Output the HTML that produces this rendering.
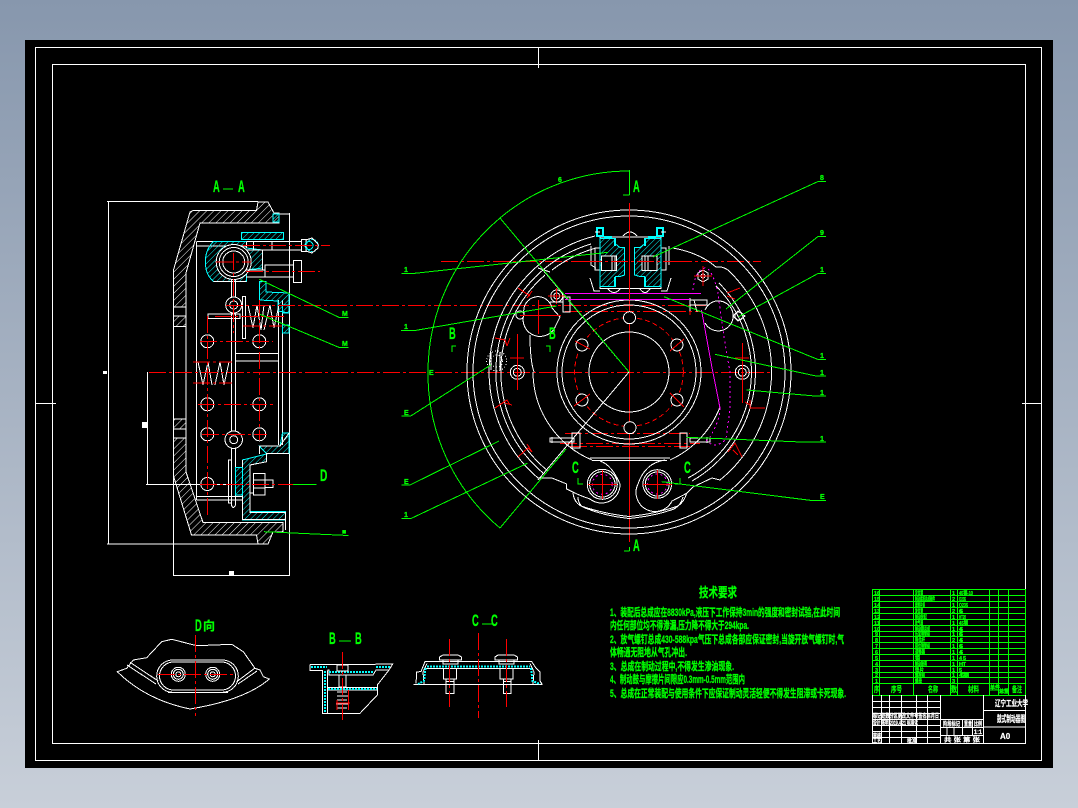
<!DOCTYPE html>
<html><head><meta charset="utf-8"><style>
html,body{margin:0;padding:0;width:1078px;height:808px;overflow:hidden;background:linear-gradient(#8797ad,#c8cfd9)}
svg{position:absolute;left:0;top:0}
.w,.r,.g,.c,.m,.d{fill:none;stroke-width:1}
.w{stroke:#fff}.r{stroke:#f00;stroke-dasharray:17 3 3 3}.rs{fill:none;stroke:#f00}.g{stroke:#0f0}.c{stroke:#0ff}.m{stroke:#f0f}.d{stroke:#f0f;stroke-dasharray:2 3}
.t{fill:#0f0;stroke:#0f0;stroke-width:.3;font-family:"Liberation Sans","Noto Sans CJK SC",sans-serif;font-weight:bold}
.tw{fill:#fff;stroke:#fff;stroke-width:.25;font-family:"Liberation Sans","Noto Sans CJK SC",sans-serif;font-weight:bold}
</style></head><body>
<svg width="1078" height="808" viewBox="0 0 1078 808" xmlns="http://www.w3.org/2000/svg" shape-rendering="crispEdges">
<defs>
<pattern id="hw" width="5" height="5" patternUnits="userSpaceOnUse" patternTransform="rotate(45)"><line x1="0" y1="0" x2="0" y2="5" stroke="#fff" stroke-width="1"/></pattern>
<pattern id="hc" width="4" height="4" patternUnits="userSpaceOnUse" patternTransform="rotate(45)"><line x1="0" y1="0" x2="0" y2="4" stroke="#0ff" stroke-width="1"/></pattern>
</defs>
<rect x="25" y="40" width="1028" height="728" fill="#000"/>
<!-- frames -->
<rect class="w" x="35.5" y="47.5" width="1006" height="713"/>
<rect class="w" x="52.5" y="64.5" width="973" height="679"/>
<path class="w" d="M538.5,47V68M538.5,740V760M36,403.5H56M1022,403.5H1042"/>

<!-- LEFT SECTION A-A -->
<g>
<path class="w" d="M107,201.5H258M108.5,201V544M107,544H258M173.5,476V576M289.5,213V576M173,575.5H289.5M147.5,372V484.5M146,484.5H230"/>
<rect x="103" y="371" width="4" height="3" fill="#fff"/><rect x="229" y="571" width="5" height="4" fill="#fff"/>
<rect x="142" y="422" width="5" height="6" fill="#fff"/>
<path class="w" style="fill:url(#hw)" d="M258,202H268L274,213H279V223H200L186,273V307H173.5V270L190,212L193,210.5H256.5Z"/>
<path class="w" style="fill:url(#hw)" d="M173.5,438H186V472L203,522.5H283V532H273L268,544H258L256.5,535H191.5L173.5,476Z"/>
<path class="w" style="fill:url(#hw)" d="M173.5,316H186V326.5H173.5ZM173.5,419H186V429H173.5Z"/>
<path class="w" d="M173.5,307V316M186,307V316M173.5,326.5V419M186,326.5V419M173.5,429V438M186,429V438"/>
<path class="w" d="M196.5,242V500M196.5,241.5H253M196.5,246H246M196.5,496.5H243M196.5,500H243M231.5,280V505M235.5,280V505Q233,510 231.5,505M278.5,300V445M282.5,300V445M235,353.5H278M235,361H278M279,214H289.5"/>
<path class="c" style="fill:url(#hc)" d="M213.5,241.5Q205,250 205.5,262Q205,274 213.5,281.5H246.5V270L262.5,268V250L246.5,248V241.5Z"/>
<circle cx="233.7" cy="262" r="17.5" fill="#000" stroke="#fff"/><circle class="w" cx="233.7" cy="262" r="14.5"/><circle class="w" cx="233.7" cy="262" r="11"/>
<path class="w" d="M213.5,281.5H246.5M246.5,270H262.5V250H246.5M246.5,241.5V248"/>
<path class="c" style="fill:url(#hc)" d="M241.7,232.7H283.3V239.3H241.7ZM273,214H279V222H273ZM259.3,281.7H266V292L289,293V313L278,311V301L259.3,300ZM282.5,305H289V313H282.5ZM282.5,325H289V333H282.5Z"/>
<rect class="w" x="253.5" y="241.5" width="48" height="8.5"/><path class="w" d="M272,241.5V250"/><rect class="w" x="301.5" y="239.5" width="4.5" height="12"/>
<circle cx="312.3" cy="245.5" r="6" fill="none" stroke="#0ff" stroke-dasharray="2 1"/><circle class="c" cx="309" cy="245.5" r="4"/><path class="w" d="M306,240L312,238L318,244V248L312,253L306,251"/>
<rect class="w" x="265" y="265" width="28.5" height="12"/><rect class="w" x="293.5" y="260.5" width="8" height="22"/><path class="w" d="M246,270H265M246,277H265"/>
<circle class="w" cx="207.3" cy="341.3" r="6.5"/><circle class="w" cx="259.3" cy="341.3" r="6.5"/><circle class="w" cx="207.3" cy="404.3" r="6.5"/><circle class="w" cx="259.3" cy="404.3" r="6.5"/><circle class="w" cx="207.3" cy="434.3" r="6.5"/><circle class="w" cx="259.3" cy="434.3" r="6.5"/><circle class="w" cx="207.3" cy="484" r="6.5"/>
<circle cx="233.7" cy="305" r="8" fill="#000" stroke="#fff"/><circle class="w" cx="233.7" cy="305" r="4"/>
<circle cx="233.7" cy="439.7" r="8.7" fill="#000" stroke="#fff"/><circle class="w" cx="233.7" cy="439.7" r="4"/>
<rect x="242.3" y="296.7" width="3.4" height="41.6" fill="#000" stroke="#fff"/><rect class="w" x="208" y="314" width="32" height="4.3"/>
<path class="w" d="M248,305L253,328L257,305L261,330L264,305M264,330L270,305L274,328L279,305"/>
<path class="w" d="M198,362L203,385L208,362L212,385M215,385L220,362L224,385L229,362"/>
<path class="c" style="fill:url(#hc)" d="M282.5,433H289V453.3H266.7V461.7L250,465V511.7H285.7V520H242.3V460L266.7,454L259.3,446H280Z"/>
<path class="w" d="M242.3,460V519.3H285.7V512.3H250V465L266.7,461.7V453.3H289M259.3,446V454M259.3,446H280L289,433"/>
<rect class="c" x="235.7" y="467.3" width="6.6" height="27.7" style="fill:url(#hc)"/>
<rect class="w" x="253.3" y="473.3" width="11.7" height="21.7"/><path class="w" d="M253.3,480H265M253.3,488H265"/><rect class="w" x="265" y="480" width="8" height="7.7"/><path class="w" d="M250,475V493H253"/>
<rect class="w" x="228.3" y="460" width="3.4" height="43"/>
<path class="w" d="M283,522V532H273M285.7,520V530"/>
<!-- red centres -->
<path class="r" d="M207.5,316V518M259.5,300V440M233.5,253V333M216,262H251M243,245.5H330M246,271.5H320M215,316.5H287M243,326H282M200,341.5H273M193,362H232M193,383H232M198,404.5H273M202,434.5H267M200,484.5H293"/>
</g>
<path class="r" d="M149,372.5H772" stroke-dasharray="24 3 4 3" style="stroke-width:1"/>
<path class="r" d="M226,305.5H706M441,261.5H761M565,311.5H700M565,433.5H690M560,443.5H700M570,446.5H690"/>
<path class="rs" d="M629.5,203V542"/>

<!-- MAIN VIEW -->
<g>
<circle class="w" cx="629" cy="372" r="162"/><circle class="w" cx="629" cy="372" r="156"/>
<path class="w" d="M595,236A140,140 0 0 0 538,478L552,478L566.7,484V489Q578,495 590,499"/>
<path class="w" d="M591,244A133,133 0 0 0 543,473"/>
<path class="w" d="M545,275A128,128 0 0 0 548,471"/>
<path class="w" d="M538,268L550,272M600,247A128,128 0 0 0 552,270"/>
<path class="w" d="M673,248Q700,253 716,267Q722,266 728,270A140,140 0 0 1 720,480L712,478L693,487L686.7,493.3"/>
<path class="w" d="M716,286A121,121 0 0 1 688,478"/>
<path class="w" d="M719,283A126,126 0 0 1 692,481"/>
<path class="w" d="M573,493Q574,502 581,506Q605,514 629,516.5Q655,514 678,506Q684,502 686.7,493.3M578,497Q578,505 585,508Q605,516 629,518.5Q655,516 674,509Q681,505 683,497"/>
<circle class="w" cx="629" cy="372" r="72"/><circle class="w" cx="629" cy="372" r="67"/><circle class="w" cx="629" cy="372" r="40"/>
<circle cx="629" cy="372" r="54.3" fill="none" stroke="#f00" stroke-dasharray="5 3"/>
<path class="w" d="M592,460.5H667M590,458H670"/>
<path class="w" d="M533,372A96,96 0 0 0 592,460M530,335Q530,360 534,372"/>
<path class="w" d="M720,407A97,97 0 0 1 670,460"/>
<path class="w" d="M600,461Q612,465 620,484A18.5,18.5 0 0 1 590,499"/>
<path class="w" d="M665,460Q645,463 638,484A19,19 0 0 0 672,501L686.7,493.3"/>
<circle class="w" cx="602.3" cy="484.3" r="15"/><circle class="w" cx="602.3" cy="484.3" r="12.7"/><circle class="d" cx="602.3" cy="484.3" r="10"/>
<circle class="w" cx="657.3" cy="484" r="14.3"/><circle class="w" cx="657.3" cy="484" r="12"/><circle class="d" cx="657.3" cy="484" r="10"/>
<path class="rs" d="M602.5,470V499M588,484.5H617M657.5,470V499M643,484.5H672"/>
<g fill="#000" stroke="#fff">
<circle cx="629.5" cy="317.7" r="6"/><circle cx="582" cy="345" r="6"/><circle cx="582" cy="400" r="6"/><circle cx="630" cy="427.7" r="6"/><circle cx="677" cy="400" r="6"/><circle cx="677" cy="345" r="6"/>
</g>
<path class="rs" d="M575,341L590,349M574,406L590,394M670,393L684,407M670,351L684,339"/>
<path class="w" d="M543,270L629,372L538,480"/>
<!-- lobes -->
<path class="w" d="M524,314A14,14 0 0 1 552,308L560,317L556,325A14,14 0 0 1 524,314"/>
<circle class="w" cx="520" cy="315" r="4"/>
<circle class="w" cx="556.7" cy="296" r="6"/><circle class="w" cx="556.7" cy="296" r="3"/>
<path class="rs" d="M538.5,300V334M520,315.5H561M548,296H566M556.5,288V304"/>
<path class="w" d="M705,310Q710,300 720,301A15,15 0 1 1 705,323"/><circle class="w" cx="739" cy="316" r="4"/><path class="w" d="M738,311L745,316L738,321L733,316Z"/>
<path class="w" d="M698,273L703,270L708,273V279L703,282L698,279Z"/><circle class="w" cx="703" cy="276" r="2"/>
<path class="rs" d="M703,266V286M694,276H712M690,298V315"/>
<!-- pins -->
<path class="w" d="M563,297H570V312H563ZM550,302H563M690,300H707V305H690M690,298V311M694,300L697,312"/>
<path class="w" d="M550,438H574V442H550ZM552,437V443M572,433H580V448H572ZM680,433H687V448H680ZM690,438H710V442H690ZM707,437V443"/>
<circle class="w" cx="517.3" cy="372.3" r="7"/><circle class="w" cx="517.3" cy="372.3" r="4"/>
<circle class="w" cx="742.3" cy="372.3" r="7"/><circle class="w" cx="742.3" cy="372.3" r="4"/>
<path class="rs" d="M517.5,334V390M510,358H524M742.5,343V403M735,358H749"/>
<circle cx="496.7" cy="361" r="10" fill="none" stroke="#fff" stroke-dasharray="1 2"/><circle cx="496.7" cy="361" r="6" fill="none" stroke="#fff" stroke-dasharray="1 2"/><path class="w" d="M491,352V370M500,352V370"/>
<path class="rs" d="M518,288L527,294L530,296M527,298L532,291M495,338L505,340L507,346M510,338L507,346M495,408L507,400L510,405M505,403L512,405M518,457L528,448L532,452M527,444L532,452M727,293L740,288M727,296L735,299M750,400V408L765,408M750,405L745,402M728,452L735,443L742,457M733,450L738,455"/>
<!-- magenta -->
<path class="m" d="M565,293.5H701M565,299.5H690M701.5,310L711.5,365L720,408"/>
<path class="d" d="M693,290Q695,270 705,268Q712,268 718,293Q720,310 725,343L730,372V408L727,432Q727,445 712,445L706,440M720,408Q720,420 710,437"/>
<!-- caliper -->
<rect x="596" y="233" width="69" height="58" fill="#000"/>
<path class="w" d="M600,237H661V288.5H600ZM600,248H595V270H600M661,248H666V270H661M590,278L594,291H600M671,278L667,291H661M623,236Q630,228 637,236M608,289Q614,296 620,289M640,289Q645,296 650,289"/>
<path class="w" d="M591,246V265L596,268M669,246V265"/>
<path class="c" style="fill:url(#hc)" d="M600,238.5H615.5V244L620,247.5H624.5V275L620,276.5H615.5V286.5H600Z"/>
<path class="c" style="fill:url(#hc)" d="M661,238.5H644.5V244L640,247.5H634.5V275L640,276.5H644.5V286.5H661Z"/>
<rect x="601.7" y="256" width="15" height="14.5" fill="#000" stroke="#fff"/><rect x="642" y="256" width="15" height="14.5" fill="#000" stroke="#fff"/>
<path class="w" d="M612,256V270M615,256V270M645,256V270M648,256V270"/>
<path class="c" stroke-width="2" style="stroke-width:2" d="M597,228H603V236H597ZM657,228H663V236H657ZM615,238V246M645,238V246M615,277V287M645,277V287M604,237H612M648,237H656"/>
<path class="rs" d="M629.5,203V300"/>
<path class="r" d="M585,261.5H680"/>
<path class="w" d="M595,232H600M661,232H666"/>
</g>

<!-- green construction & leaders -->
<g>
<path class="g" d="M500,218L629,372M500,528L566,449"/>
<path class="g" d="M629,171A201,201 0 0 0 500,218A201,201 0 0 0 428,372A201,201 0 0 0 500,528"/>
<path class="g" d="M629.5,170V195M623,195H629.5M629.5,547V551M624,551H629.5"/>
<path class="g" d="M826,181.5H818L653,257M826,236.5H818L726,309M826,273.5H818L738.7,316.7M826,359.5H818L664,296.7M826,376H816L715,354.3M826,396H815L746.7,390M826,442H801.7L686.7,437.3M826,500.5H811.7L661.7,481.7"/>
<path class="g" d="M401.5,273.5H413L608,252.3M401,330.5H415L556.7,306M401.5,416H410.7L490.7,365M401.5,485H410L499,441M401.5,518.5H411L527.3,463.3"/>
<path class="g" d="M259.3,279.3L339.3,317.5H348.3M259.3,314L339.3,347.5H348.3M264,531.7L348.3,535.5M293,484.5H316.7M223,189H233"/>
<path class="g" d="M452,352V346H456M550,352V346H546M578,478V484H583M680,478V484H675"/>
</g>
<g class="t" font-size="8">
<text x="820" y="180" font-size="7">8</text><text x="820" y="235" font-size="7">9</text><text x="820" y="272" font-size="7">1</text><text x="820" y="358" font-size="7">1</text><text x="820" y="375" font-size="7">1</text><text x="820" y="395" font-size="7">1</text><text x="820" y="441" font-size="7">1</text><text x="820" y="499" font-size="7">E</text>
<text x="404" y="272" font-size="7">1</text><text x="404" y="329" font-size="7">1</text><text x="404" y="415" font-size="7">E</text><text x="404" y="484" font-size="7">E</text><text x="404" y="517" font-size="7">1</text>
<text x="342" y="316" font-size="7">M</text><text x="342" y="346" font-size="7">M</text><text x="342" y="534" font-size="7">■</text>
<text x="429" y="375" font-size="7">E</text><text x="558" y="182" font-size="7">6</text>
</g>
<g class="t" font-size="17">
<text transform="translate(213,192) scale(.55,1)">A</text><text transform="translate(238,192) scale(.55,1)">A</text>
<text transform="translate(633,192) scale(.55,1)">A</text><text transform="translate(633,551) scale(.55,1)">A</text>
<text transform="translate(449,339) scale(.55,1)">B</text><text transform="translate(549,339) scale(.55,1)">B</text>
<text transform="translate(572,473) scale(.55,1)">C</text><text transform="translate(684,473) scale(.55,1)">C</text>
<text transform="translate(320,481) scale(.6,1)">D</text>
<text transform="translate(195,631) scale(.55,1)">D</text><text x="203" y="630" font-size="12">向</text>
<text transform="translate(329,644) scale(.55,1)">B</text><text transform="translate(355,644) scale(.55,1)">B</text>
<text transform="translate(472,626) scale(.55,1)">C</text><text transform="translate(491,626) scale(.55,1)">C</text>
</g>
<path class="g" d="M339,641H351M482,624H492"/>

<!-- D view -->
<g>
<path class="w" d="M117.3,671.7L126.7,668.3L133.3,660L146.7,657.7L161.7,641.7L171.7,639.3L196.7,645.7L231.7,644.3L243.3,651.7L255,668.3L260,670L263.3,676.7L269.3,679Q245,700 190,709Q146,700 117.3,671.7Z"/>
<path class="w" d="M130,662.3L158.3,681M127,665L156,684M255,668L236.7,681.7M257,671L238,684"/>
<rect class="w" x="156.7" y="660" width="81.6" height="32.3" rx="16"/><rect class="w" x="159.5" y="662" width="76" height="28" rx="14"/>
<path class="w" d="M168,692.5H228"/>
<circle class="w" cx="178.3" cy="674.3" r="7"/><circle class="w" cx="178.3" cy="674.3" r="5"/><circle class="w" cx="178.3" cy="674.3" r="2.5"/>
<circle class="w" cx="212.7" cy="674.3" r="7"/><circle class="w" cx="212.7" cy="674.3" r="5"/><circle class="w" cx="212.7" cy="674.3" r="2.5"/>
<path class="r" d="M195.5,635V716M158,674.5H233"/>
</g>

<!-- B-B -->
<g>
<path class="w" d="M310,664.3H375L379,664H392.7L389,670L377.3,685V695L360,713.3H327.3M310,664.3V670.7H322.7V713.3H327.3V670.7M327.3,670H329V675H373L376,670H389M327.3,687.7H377.3M327.3,690H377.3"/>
<path class="c" style="stroke-width:2" stroke-dasharray="2 1" d="M311,667H327M329,672H373M376,667H391M325,671V713M328,689H377"/>
<rect class="w" x="337" y="665" width="11" height="6"/><rect class="w" x="339" y="675" width="7" height="12"/>
<path class="w" d="M337,692H347M337,696H348M337,700H347M336,704H348M337,708H347"/>
<path class="r" d="M342.5,652V720"/>
<path class="rs" d="M348.5,690V710M337,700V710M336,703H350"/>
</g>

<!-- C-C -->
<g>
<path class="w" d="M413.3,684.5H542.7M416,683.5L416.7,672L421,671.5L425,661.7H531.7L536,668L540,672V681L542,684"/>
<path class="w" d="M427,663.5L423,672L424,684M530,663.5L534,672L533,684M426,668.5H531"/>
<path class="c" style="stroke-width:2" stroke-dasharray="2 1" d="M427,666.5H530M425.5,668L424,681L418,684M531,668L532.5,681L540,684"/>
<path class="w" d="M439.5,660V657L443,655H458L461.5,657V660ZM495,660V657L498,655H514L517.5,657V660Z"/>
<path class="w" d="M443,660V664H458V660M499,660V664H514V660"/>
<rect class="w" x="443.5" y="668.5" width="13" height="10.5"/><rect class="w" x="500" y="668.5" width="13" height="10.5"/>
<rect class="w" x="446" y="681.5" width="8" height="12"/><rect class="w" x="503.5" y="681.5" width="7.5" height="12"/>
<path class="w" d="M446,679V681.5H454V679M503.5,679V681.5H511V679"/>
<path class="r" d="M478.5,633V718M449.5,639V707M506.5,639V707"/>
</g>

<!-- tech requirements -->
<g class="t">
<text x="699" y="597" font-size="13" textLength="38" lengthAdjust="spacingAndGlyphs">技术要求</text>
<g font-size="11">
<text x="610" y="616" textLength="230" lengthAdjust="spacingAndGlyphs">1、装配后总成应在8830kPa,液压下工作保持3min的强度和密封试验,在此时间</text>
<text x="610" y="629" textLength="139" lengthAdjust="spacingAndGlyphs">内任何部位均不得渗漏,压力降不得大于294kpa.</text>
<text x="610" y="643" textLength="234" lengthAdjust="spacingAndGlyphs">2、放气螺钉总成430-588kpa气压下总成各部应保证密封,当旋开放气螺钉时,气</text>
<text x="610" y="656" textLength="77" lengthAdjust="spacingAndGlyphs">体畅通无阻地从气孔冲出.</text>
<text x="610" y="670" textLength="124" lengthAdjust="spacingAndGlyphs">3、总成在制动过程中,不得发生渗油现象.</text>
<text x="610" y="683" textLength="135" lengthAdjust="spacingAndGlyphs">4、制动鼓与摩擦片间隙应0.3mm-0.5mm范围内</text>
<text x="610" y="697" textLength="236" lengthAdjust="spacingAndGlyphs">5、总成在正常装配与使用条件下应保证制动灵活轻便不得发生阻滞或卡死现象.</text>
</g>
</g>

<!-- title block green -->
<g>
<rect class="g" x="872.5" y="589.5" width="153" height="106"/>
<path class="g" d="M872,595.5H1025M872,601.5H1025M872,607.5H1025M872,613.5H1025M872,619.5H1025M872,625.5H1025M872,631.5H1025M872,636.5H1025M872,642.5H1025M872,648.5H1025M872,654.5H1025M872,660.5H1025M872,666.5H1025M872,672.5H1025M872,677.5H1025M872,683.5H1025"/>
<path class="g" d="M879.5,589V695M913.5,589V695M950.5,589V695M957.5,589V695M989.5,589V695M998.5,589V695M1008.5,589V695M989,690H1008"/>
</g>
<g class="t" font-size="5.5">
<text x="874" y="595">16</text><text x="874" y="601">15</text><text x="874" y="607">14</text><text x="874" y="613">13</text><text x="874" y="619">12</text><text x="874" y="625">11</text><text x="874" y="631">10</text><text x="875" y="636">9</text><text x="875" y="642">8</text><text x="875" y="648">7</text><text x="875" y="654">6</text><text x="875" y="660">5</text><text x="875" y="666">4</text><text x="875" y="672">3</text><text x="875" y="677">2</text><text x="875" y="683">1</text>
<text x="915" y="595" textLength="8" lengthAdjust="spacingAndGlyphs">定位销</text>
<text x="915" y="601" textLength="20" lengthAdjust="spacingAndGlyphs">制动底板总成部件</text>
<text x="915" y="607" textLength="10" lengthAdjust="spacingAndGlyphs">摩擦片组</text>
<text x="915" y="613" textLength="8" lengthAdjust="spacingAndGlyphs">复位簧</text>
<text x="915" y="619" textLength="12" lengthAdjust="spacingAndGlyphs">制动轮缸</text>
<text x="915" y="625" textLength="8" lengthAdjust="spacingAndGlyphs">放气阀</text>
<text x="915" y="631" textLength="15" lengthAdjust="spacingAndGlyphs">制动蹄总成</text>
<text x="915" y="636" textLength="15" lengthAdjust="spacingAndGlyphs">压紧弹簧组</text>
<text x="915" y="642" textLength="10" lengthAdjust="spacingAndGlyphs">限位杆</text>
<text x="915" y="648" textLength="15" lengthAdjust="spacingAndGlyphs">回位弹簧组</text>
<text x="915" y="654" textLength="10" lengthAdjust="spacingAndGlyphs">调整器</text>
<text x="915" y="660" textLength="5" lengthAdjust="spacingAndGlyphs">销</text>
<text x="915" y="666" textLength="12" lengthAdjust="spacingAndGlyphs">制动鼓壳</text>
<text x="915" y="672" textLength="9" lengthAdjust="spacingAndGlyphs">垫片</text>
<text x="915" y="677" textLength="10" lengthAdjust="spacingAndGlyphs">螺栓组</text>
<text x="915" y="683" textLength="7" lengthAdjust="spacingAndGlyphs">螺母</text>
<text x="952" y="595">1</text><text x="952" y="601">2</text><text x="952" y="607">1</text><text x="952" y="613">2</text><text x="952" y="619">1</text><text x="952" y="625">1</text><text x="952" y="631">1</text><text x="952" y="636">1</text><text x="952" y="642">2</text><text x="952" y="648">1</text><text x="952" y="654">1</text><text x="952" y="660">1</text><text x="952" y="666">1</text><text x="952" y="672">1</text><text x="952" y="677">1</text><text x="952" y="683">3</text>
<text x="959" y="595" textLength="14" lengthAdjust="spacingAndGlyphs">45钢-10</text>
<text x="959" y="601" textLength="7" lengthAdjust="spacingAndGlyphs">Q235</text>
<text x="959" y="607" textLength="9" lengthAdjust="spacingAndGlyphs">Q235</text>
<text x="959" y="613" textLength="4">65</text>
<text x="959" y="619" textLength="7" lengthAdjust="spacingAndGlyphs">HT20</text>
<text x="959" y="625" textLength="9" lengthAdjust="spacingAndGlyphs">45钢</text>
<text x="959" y="631" textLength="4">45</text><text x="959" y="636" textLength="4">65</text><text x="959" y="642" textLength="4">45</text>
<text x="959" y="648" textLength="4">65</text><text x="959" y="654" textLength="4">45</text><text x="959" y="660" textLength="7">45</text>
<text x="959" y="666" textLength="7">HT</text><text x="959" y="672" textLength="3">5</text><text x="959" y="677" textLength="10">45钢</text>
</g>
<g class="t" font-size="8">
<text x="891" y="692" textLength="11" lengthAdjust="spacingAndGlyphs">序号</text>
<text x="928" y="692" textLength="10" lengthAdjust="spacingAndGlyphs">名称</text>
<text x="968" y="692" textLength="11" lengthAdjust="spacingAndGlyphs">材料</text>
<text x="1012" y="692" textLength="10" lengthAdjust="spacingAndGlyphs">备注</text>
<text x="874" y="692" textLength="5" lengthAdjust="spacingAndGlyphs">序</text><text x="951" y="692" textLength="6" lengthAdjust="spacingAndGlyphs">数</text>
<text x="990" y="689" font-size="5">单件</text><text x="999" y="693" font-size="5">总重</text>
</g>
<!-- title block white -->
<g>
<path class="w" d="M872.5,695V743.5M1025.5,695V744M872,743.5H1025M940.5,695V743M983.5,695V743M872,701.5H940M872,707.5H940M872,713.5H940M872,719.5H940M872,725.5H940M872,731.5H940M872,737.5H940M881.5,695V743M889.5,695V743M901.5,695V743M916.5,695V743M927.5,695V743M983,710.5H1025M983,727H1025M940,719.5H983M940,727.5H983M940,735.5H983M962.5,719V735M972.5,719V735M947,727V735M954,727V735"/>
</g>
<g class="tw" font-size="6">
<text x="873" y="718" textLength="66" lengthAdjust="spacingAndGlyphs">标记处数分区更改文件号签名年月日</text>
<text x="873" y="725" textLength="45" lengthAdjust="spacingAndGlyphs">设计 陈明 2019.4.21 标准化</text>
<text x="873" y="738" textLength="8" lengthAdjust="spacingAndGlyphs">审核</text><text x="873" y="743" textLength="8" lengthAdjust="spacingAndGlyphs">工艺</text>
<text x="907" y="743" textLength="10" lengthAdjust="spacingAndGlyphs">批准</text>
<text x="943" y="726" textLength="17" lengthAdjust="spacingAndGlyphs">阶段标记</text><text x="964" y="726" textLength="8" lengthAdjust="spacingAndGlyphs">重量</text><text x="974" y="726" textLength="8" lengthAdjust="spacingAndGlyphs">比例</text>
<text x="974" y="734" textLength="8" lengthAdjust="spacingAndGlyphs">1:1</text>
<text x="944" y="742" textLength="36" lengthAdjust="spacingAndGlyphs">共 张 第 张</text>
</g>
<g class="tw">
<text x="995" y="706" font-size="8" textLength="33" lengthAdjust="spacingAndGlyphs">辽宁工业大学</text>
<text x="997" y="722" font-size="9" textLength="28" lengthAdjust="spacingAndGlyphs">鼓式制动器图</text>
<text x="1000" y="739" font-size="8">A0</text>
</g>
</svg>
</body></html>
